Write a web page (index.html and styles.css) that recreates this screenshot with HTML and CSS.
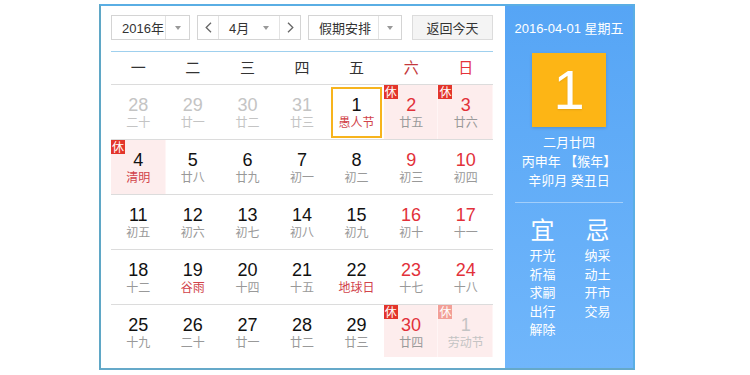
FILE: index.html
```html
<!DOCTYPE html>
<html lang="zh-CN">
<head>
    <meta charset="UTF-8">
    <meta name="viewport" content="width=device-width, initial-scale=1.0">
    <title>万年历</title>
    <link rel="stylesheet" href="styles.css">
</head>
<body>
    <div class="calendar">
        <div class="main">
            <div class="toolbar">
                <div class="select year">
                    <span class="value">2016年</span>
                    <span class="drop"><i class="caret"></i></span>
                </div>
                <div class="select month">
                    <span class="nav">
                        <svg width="7" height="11" viewBox="0 0 7 11"><path d="M6 0.8 L1.2 5.5 L6 10.2" fill="none" stroke="#666" stroke-width="1.3"/></svg>
                    </span>
                    <span class="value">4月</span>
                    <span class="drop"><i class="caret"></i></span>
                    <span class="nav next">
                        <svg width="7" height="11" viewBox="0 0 7 11"><path d="M1 0.8 L5.8 5.5 L1 10.2" fill="none" stroke="#666" stroke-width="1.3"/></svg>
                    </span>
                </div>
                <div class="select holiday">
                    <span class="value">假期安排</span>
                    <span class="drop"><i class="caret"></i></span>
                </div>
                <button class="back-btn">返回今天</button>
            </div>

            <div class="weekdays">
                <span>一</span><span>二</span><span>三</span><span>四</span><span>五</span>
                <span class="sat">六</span><span class="sun">日</span>
            </div>

            <div class="weeks">
                <div class="week">
                    <div class="day other"><b>28</b><small>二十</small></div>
                    <div class="day other"><b>29</b><small>廿一</small></div>
                    <div class="day other"><b>30</b><small>廿二</small></div>
                    <div class="day other"><b>31</b><small>廿三</small></div>
                    <div class="day today"><b>1</b><small class="fest">愚人节</small></div>
                    <div class="day weekend rest"><em class="tag">休</em><b>2</b><small>廿五</small></div>
                    <div class="day weekend rest"><em class="tag">休</em><b>3</b><small>廿六</small></div>
                </div>
                <div class="week">
                    <div class="day rest"><em class="tag">休</em><b>4</b><small class="fest">清明</small></div>
                    <div class="day"><b>5</b><small>廿八</small></div>
                    <div class="day"><b>6</b><small>廿九</small></div>
                    <div class="day"><b>7</b><small>初一</small></div>
                    <div class="day"><b>8</b><small>初二</small></div>
                    <div class="day weekend"><b>9</b><small>初三</small></div>
                    <div class="day weekend"><b>10</b><small>初四</small></div>
                </div>
                <div class="week">
                    <div class="day"><b>11</b><small>初五</small></div>
                    <div class="day"><b>12</b><small>初六</small></div>
                    <div class="day"><b>13</b><small>初七</small></div>
                    <div class="day"><b>14</b><small>初八</small></div>
                    <div class="day"><b>15</b><small>初九</small></div>
                    <div class="day weekend"><b>16</b><small>初十</small></div>
                    <div class="day weekend"><b>17</b><small>十一</small></div>
                </div>
                <div class="week">
                    <div class="day"><b>18</b><small>十二</small></div>
                    <div class="day"><b>19</b><small class="fest">谷雨</small></div>
                    <div class="day"><b>20</b><small>十四</small></div>
                    <div class="day"><b>21</b><small>十五</small></div>
                    <div class="day"><b>22</b><small class="fest">地球日</small></div>
                    <div class="day weekend"><b>23</b><small>十七</small></div>
                    <div class="day weekend"><b>24</b><small>十八</small></div>
                </div>
                <div class="week">
                    <div class="day"><b>25</b><small>十九</small></div>
                    <div class="day"><b>26</b><small>二十</small></div>
                    <div class="day"><b>27</b><small>廿一</small></div>
                    <div class="day"><b>28</b><small>廿二</small></div>
                    <div class="day"><b>29</b><small>廿三</small></div>
                    <div class="day weekend rest"><em class="tag">休</em><b>30</b><small>廿四</small></div>
                    <div class="day other rest"><em class="tag">休</em><b>1</b><small>劳动节</small></div>
                </div>
            </div>
        </div>

        <aside class="panel">
            <p class="date">2016-04-01 星期五</p>
            <div class="big-day">1</div>
            <div class="lunar-info">
                <p>二月廿四</p>
                <p>丙申年 【猴年】</p>
                <p>辛卯月 癸丑日</p>
            </div>
            <div class="divider"></div>
            <div class="almanac">
                <div class="col">
                    <h3>宜</h3>
                    <p>开光</p>
                    <p>祈福</p>
                    <p>求嗣</p>
                    <p>出行</p>
                    <p>解除</p>
                </div>
                <div class="col">
                    <h3>忌</h3>
                    <p>纳采</p>
                    <p>动土</p>
                    <p>开市</p>
                    <p>交易</p>
                </div>
            </div>
        </aside>
    </div>
</body>
</html>
```

FILE: styles.css
```css
* {
    margin: 0;
    padding: 0;
    box-sizing: border-box;
}

body {
    background-color: #fff;
    color: #333;
    font-family: "Liberation Sans", "Noto Sans CJK SC", sans-serif;
}

.calendar {
    display: flex;
    width: 536px;
    height: 366px;
    margin: 4px 0 0 99px;
    border: 2px solid #5aaee4;
    border-left-color: #5fa7c6;
    border-bottom-color: #65a9c9;
}

/* 左侧日历 */
.main {
    width: 404px;
    padding: 9px 12px 0 10px;
}

.toolbar {
    display: flex;
    height: 25px;
    font-size: 13px;
    color: #333;
}

.select {
    display: flex;
    align-items: center;
    height: 100%;
    border: 1px solid #d4d4d4;
    background-color: #fff;
}

.select .value {
    display: flex;
    align-items: center;
    height: 100%;
    padding-left: 10px;
    white-space: nowrap;
}

.select .drop {
    display: flex;
    align-items: center;
    justify-content: center;
    height: 100%;
    flex: 1;
}

.caret {
    display: block;
    width: 0;
    height: 0;
    border-top: 4px solid #999;
    border-left: 3.5px solid transparent;
    border-right: 3.5px solid transparent;
}

.year {
    width: 79px;
}

.year .value {
    width: 54px;
    border-right: 1px solid #e3e3e3;
}

.month {
    width: 104px;
    margin-left: 7px;
}

.month .nav {
    display: flex;
    align-items: center;
    justify-content: center;
    width: 21px;
    height: 100%;
    border-right: 1px solid #e3e3e3;
}

.month .nav.next {
    border-right: none;
    border-left: 1px solid #e3e3e3;
}

.month .value {
    width: 34px;
}

.holiday {
    width: 94px;
    margin-left: 7px;
}

.holiday .value {
    width: 70px;
    border-right: 1px solid #e3e3e3;
}

.back-btn {
    width: 81px;
    height: 100%;
    margin-left: 10px;
    border: 1px solid #dcdcdc;
    background-color: #f4f4f4;
    color: #333;
    font-size: 13px;
    font-family: "Liberation Sans", "Noto Sans CJK SC", sans-serif;
}

.weekdays {
    display: grid;
    grid-template-columns: repeat(7, 1fr);
    height: 34px;
    margin-top: 11px;
    border-top: 1px solid #9fd0ee;
    border-bottom: 1px solid #dcdcdc;
    line-height: 32px;
    text-align: center;
    font-size: 15px;
    color: #333;
}

.weekdays .sat {
    color: #c4383c;
}

.weekdays .sun {
    color: #e5333a;
}

.week {
    display: grid;
    grid-template-columns: repeat(7, 1fr);
    height: 55px;
    border-bottom: 1px solid #dcdcdc;
}

.week:last-child {
    height: 54px;
    border-bottom: none;
}

.day {
    position: relative;
    padding-top: 10px;
    text-align: center;
}

.day b {
    display: block;
    font-weight: normal;
    font-size: 18px;
    line-height: 20px;
    color: #111;
}

.day small {
    display: block;
    font-size: 12px;
    line-height: 16px;
    color: #999;
}

.day small.fest {
    color: #d1434a;
}

.day.weekend b {
    color: #e2313a;
}

.day.other b,
.day.other small {
    color: #c4c4c4;
}

.day.rest {
    background-color: #fdeded;
    box-shadow: inset -1px 0 #fff5f5;
}

.week:last-child .day.rest {
    margin-bottom: 2px;
}

.tag {
    position: absolute;
    top: 0;
    left: 0;
    width: 14px;
    height: 14px;
    background-color: #e3352b;
    color: #fff;
    font-style: normal;
    font-size: 12px;
    line-height: 14px;
    text-align: center;
    font-family: "Noto Sans CJK SC", sans-serif;
}

.day.other .tag {
    background-color: #f29f97;
}

.day.today::after {
    content: "";
    position: absolute;
    top: 2px;
    left: 2px;
    right: 2px;
    bottom: 1px;
    border: 2px solid #f7b41d;
}

/* 右侧黄历 */
.panel {
    width: 128px;
    background: linear-gradient(#56a5f5, #70b6fb);
    color: #fff;
    text-align: center;
}

.date {
    margin-top: 14px;
    font-size: 13px;
    line-height: 18px;
}

.big-day {
    width: 74px;
    height: 74px;
    margin: 15px auto 0;
    background-color: #fdb515;
    box-shadow: 0 1px 3px rgba(0, 0, 0, 0.15);
    font-family: "Liberation Sans", sans-serif;
    font-size: 56px;
    line-height: 74px;
    text-shadow: 0 1px 2px rgba(0, 0, 0, 0.1);
}

.lunar-info {
    margin-top: 6px;
    font-size: 13px;
    line-height: 19px;
}

.divider {
    width: 108px;
    height: 1px;
    margin: 12px auto 0;
    background-color: rgba(255, 255, 255, 0.4);
}

.almanac {
    display: flex;
    padding-left: 10px;
    margin-top: 15px;
}

.almanac .col {
    width: 55px;
}

.almanac h3 {
    font-weight: normal;
    font-size: 24px;
    line-height: 26px;
    margin-bottom: 3px;
}

.almanac p {
    font-size: 13px;
    line-height: 18.5px;
}
```
